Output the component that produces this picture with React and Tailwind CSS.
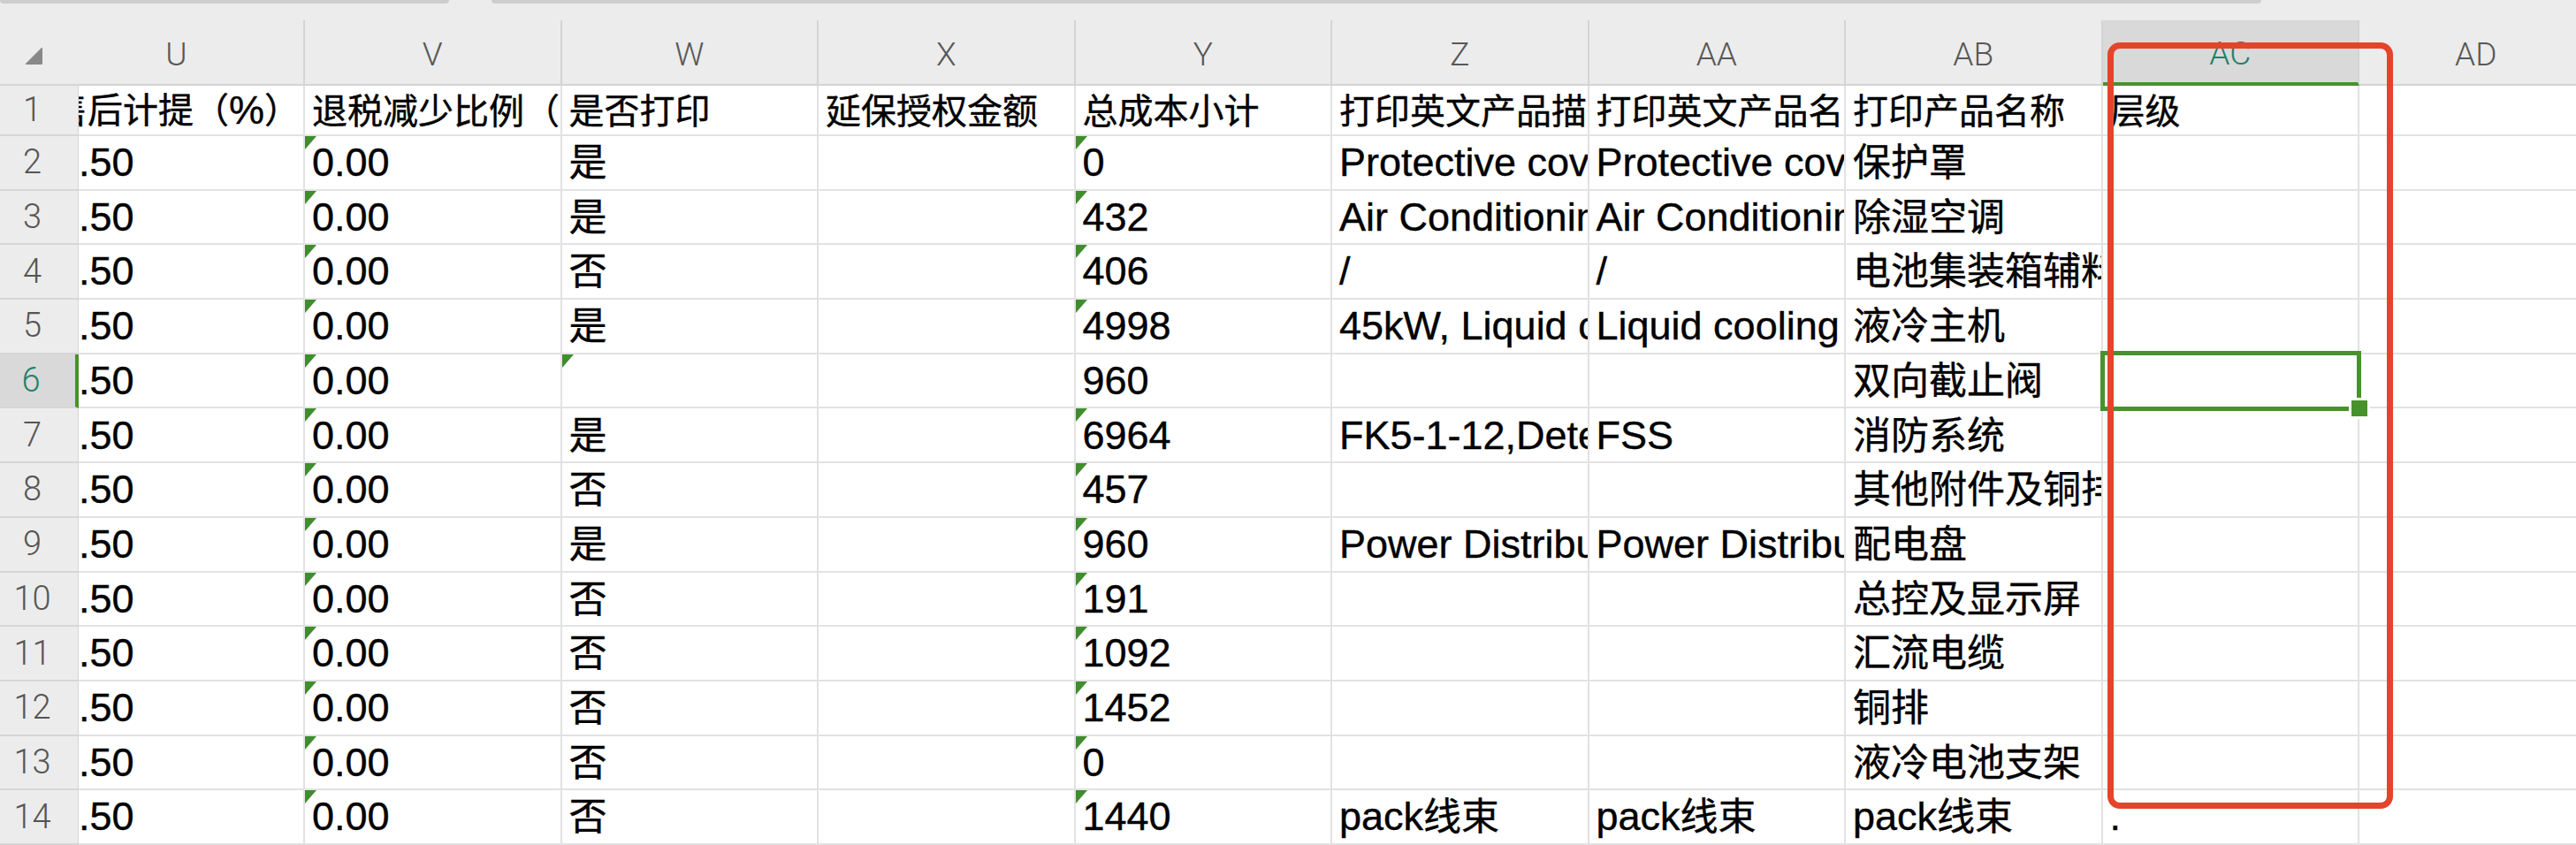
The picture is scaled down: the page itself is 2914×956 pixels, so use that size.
import clsx from "clsx";

const LATIN = "font-['Liberation_Sans','Noto_Sans_CJK_SC',sans-serif]";
const LABEL = "font-['Roboto','Liberation_Sans',sans-serif] font-light";

const COLS = ["V", "W", "X", "Y", "Z", "AA", "AB", "AC"];

const ROWS = [
  { n: 2, u: "2.50", v: "0.00", w: "是", x: "", y: "0", z: "Protective cover", aa: "Protective cover", ab: "保护罩", ac: "" },
  { n: 3, u: "2.50", v: "0.00", w: "是", x: "", y: "432", z: "Air Conditioning", aa: "Air Conditioning", ab: "除湿空调", ac: "" },
  { n: 4, u: "2.50", v: "0.00", w: "否", x: "", y: "406", z: "/", aa: "/", ab: "电池集装箱辅料", ac: "" },
  { n: 5, u: "2.50", v: "0.00", w: "是", x: "", y: "4998", z: "45kW, Liquid cooling unit", aa: "Liquid cooling unit", ab: "液冷主机", ac: "" },
  { n: 6, u: "2.50", v: "0.00", w: "", x: "", y: "960", z: "", aa: "", ab: "双向截止阀", ac: "" },
  { n: 7, u: "2.50", v: "0.00", w: "是", x: "", y: "6964", z: "FK5-1-12,Detector", aa: "FSS", ab: "消防系统", ac: "" },
  { n: 8, u: "2.50", v: "0.00", w: "否", x: "", y: "457", z: "", aa: "", ab: "其他附件及铜排", ac: "" },
  { n: 9, u: "2.50", v: "0.00", w: "是", x: "", y: "960", z: "Power Distribution Cabinet", aa: "Power Distribution Cabinet", ab: "配电盘", ac: "" },
  { n: 10, u: "2.50", v: "0.00", w: "否", x: "", y: "191", z: "", aa: "", ab: "总控及显示屏", ac: "" },
  { n: 11, u: "2.50", v: "0.00", w: "否", x: "", y: "1092", z: "", aa: "", ab: "汇流电缆", ac: "" },
  { n: 12, u: "2.50", v: "0.00", w: "否", x: "", y: "1452", z: "", aa: "", ab: "铜排", ac: "" },
  { n: 13, u: "2.50", v: "0.00", w: "否", x: "", y: "0", z: "", aa: "", ab: "液冷电池支架", ac: "" },
  { n: 14, u: "2.50", v: "0.00", w: "否", x: "", y: "1440", z: "pack线束", aa: "pack线束", ab: "pack线束", ac: "." },
];

// CJK runs use their own size next to the Latin text
const CJK = /([\u2E80-\u9FFF\uFF00-\uFFEF]+)/;
const Txt = ({ s, cjk }) =>
  s.split(CJK).map((part, i) =>
    CJK.test(part) ? (
      <span key={i} className={cjk}>
        {part}
      </span>
    ) : (
      part
    )
  );

// little green "number stored as text" flag
const Mark = () => (
  <svg className="absolute left-0 top-0" width="13" height="15" viewBox="0 0 13 15">
    <polygon points="0,0 13,0 0,15" fill="#3f8d2d" />
  </svg>
);

const Cell = ({ text, mark, selected, head }) => (
  <div
    className={clsx(
      "relative w-[290.5px] shrink-0 h-full border-r-2 border-b-2 border-[#e2e2e2] bg-white pl-[8px] flex items-center whitespace-nowrap",
      !selected && "overflow-hidden"
    )}
  >
    {mark && <Mark />}
    <span className="text-black [-webkit-text-stroke:0.4px_black]">
      <Txt s={text} cjk={head ? "text-[40px]" : "text-[43px]"} />
    </span>
    {selected && (
      <>
        <div className="absolute -left-[3px] -top-[4px] -right-[4px] -bottom-[5px] border-[5px] border-[#47922d] z-10" />
        <div className="absolute -right-[14px] -bottom-[14px] w-[24px] h-[24px] bg-[#47922d] border-[3px] border-white z-10" />
      </>
    )}
  </div>
);

const RowHead = ({ n, active }) => (
  <div
    className={clsx(
      "w-[89px] h-full shrink-0 flex items-center justify-center pr-[15px] border-b-2 border-[#d6d6d6] text-[38px]",
      LABEL,
      active ? "bg-[#d9d9d9] text-[#23806a] border-r-4 border-r-[#47922d]" : "bg-[#ececec] text-[#555555] border-r border-r-[#d6d6d6]"
    )}
  >
    {n}
  </div>
);

const ColHead = ({ label, active }) => (
  <div
    className={clsx(
      "w-[290.5px] shrink-0 flex items-center justify-center pt-[6px] border-r-2 border-r-[#d4d4d4] text-[37px]",
      LABEL,
      active ? "bg-[#d9d9d9] text-[#23806a] border-b-4 border-b-[#47922d]" : "text-[#585858] border-b-2 border-b-[#d4d4d4]"
    )}
  >
    {label}
  </div>
);

export default function App() {
  return (
    <div className={clsx("relative w-[2914px] h-[956px] overflow-hidden bg-[#ececec]", LATIN)}>
      {/* toolbar edges peeking in at the top */}
      <div className="flex h-[23px] gap-[48px]">
        <div className="w-[508px] h-[4px] bg-[#cdcdcd] rounded-b-[8px]" />
        <div className="w-[2002px] h-[4px] bg-[#cdcdcd] rounded-b-[8px]" />
      </div>

      {/* column letters */}
      <div className="flex h-[74px]">
        <div className="relative w-[89px] shrink-0 border-b-2 border-[#d4d4d4]">
          <svg className="absolute left-[27px] top-[30px]" width="22" height="21" viewBox="0 0 22 21">
            <path d="M20 1 Q21 0 21 2 L21 19 Q21 20 19 20 L3 20 Q1 20 2 19 Z" fill="#888888" />
          </svg>
        </div>
        <div className="w-[256px] shrink-0 overflow-hidden border-r-2 border-r-[#d4d4d4] border-b-2 border-b-[#d4d4d4]">
          <div className={clsx("ml-[-35px] w-[291px] h-full flex items-center justify-center pt-[6px] text-[37px] text-[#585858]", LABEL)}>
            U
          </div>
        </div>
        {COLS.map((c) => (
          <ColHead key={c} label={c} active={c === "AC"} />
        ))}
        <div className={clsx("flex-1 flex items-center pt-[6px] pl-[108px] border-b-2 border-b-[#d4d4d4] text-[37px] text-[#585858]", LABEL)}>
          AD
        </div>
      </div>

      {/* header row */}
      <div className="flex h-[57px] text-[45px]">
        <RowHead n={1} />
        <div className="w-[256px] shrink-0 overflow-hidden border-r-2 border-b-2 border-[#e2e2e2] bg-white">
          <div className="ml-[-35px] w-[291px] h-full flex items-center pl-[5px] whitespace-nowrap text-black [-webkit-text-stroke:0.4px_black]">
            <Txt s="售后计提（%）" cjk="text-[40px]" />
          </div>
        </div>
        <Cell head text="退税减少比例（%）" />
        <Cell head text="是否打印" />
        <Cell head text="延保授权金额" />
        <Cell head text="总成本小计" />
        <Cell head text="打印英文产品描述" />
        <Cell head text="打印英文产品名称" />
        <Cell head text="打印产品名称" />
        <Cell head text="层级" />
        <div className="flex-1 h-full bg-white border-b-2 border-[#e2e2e2]" />
      </div>

      {ROWS.map((r) => (
        <div key={r.n} className="flex h-[61.7px] text-[45px]">
          <RowHead n={r.n} active={r.n === 6} />
          <div className="w-[256px] shrink-0 overflow-hidden border-r-2 border-b-2 border-[#e2e2e2] bg-white">
            <div className="ml-[-35px] w-[291px] h-full flex items-center pl-[10px] text-black [-webkit-text-stroke:0.4px_black]">{r.u}</div>
          </div>
          <Cell text={r.v} mark />
          <Cell text={r.w} mark={r.n === 6} />
          <Cell text={r.x} />
          <Cell text={r.y} mark={r.n !== 6} />
          <Cell text={r.z} />
          <Cell text={r.aa} />
          <Cell text={r.ab} />
          <Cell text={r.ac} selected={r.n === 6} />
          <div className="flex-1 h-full bg-white border-b-2 border-[#e2e2e2]" />
        </div>
      ))}

      {/* red callout around the 层级 column */}
      <div className="absolute left-[2384px] top-[48px] w-[323px] h-[867px] border-[7px] border-[#e5442b] rounded-[14px] z-20 pointer-events-none" />
    </div>
  );
}
